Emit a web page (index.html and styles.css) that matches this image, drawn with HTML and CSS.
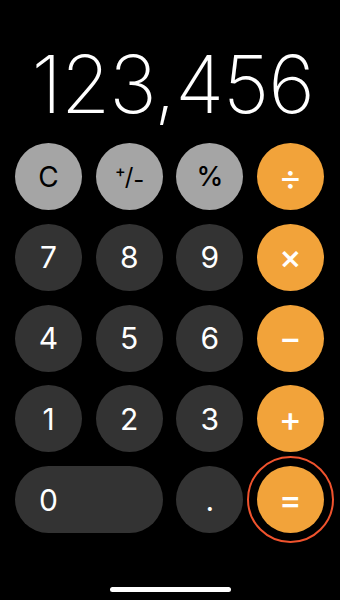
FILE: index.html
```html
<!DOCTYPE html>
<html>
<head>
<meta charset="utf-8">
<link rel="stylesheet" href="styles.css">
</head>
<body>
<div class="screen">
  <div class="display">123,456</div>
  <div class="keypad">
    <button class="key fn">C</button>
    <button class="key fn pm"><span class="pm-plus">+</span><span class="pm-slash">/</span><span class="pm-minus">-</span></button>
    <button class="key fn pct">%</button>
    <button class="key op div">÷</button>

    <button class="key num">7</button>
    <button class="key num">8</button>
    <button class="key num">9</button>
    <button class="key op">×</button>

    <button class="key num">4</button>
    <button class="key num">5</button>
    <button class="key num">6</button>
    <button class="key op">−</button>

    <button class="key num">1</button>
    <button class="key num">2</button>
    <button class="key num">3</button>
    <button class="key op">+</button>

    <button class="key num zero">0</button>
    <button class="key num dot">.</button>
    <button class="key op eq">=<span class="ring"></span></button>
  </div>
  <div class="home-bar"><div class="home-indicator"></div></div>
</div>
</body>
</html>
```

FILE: styles.css
```css
html, body {
  margin: 0;
  padding: 0;
  background: #000;
}
.screen {
  width: 340px;
  height: 600px;
  background: #000;
  display: flex;
  flex-direction: column;
  font-family: Inter, "Liberation Sans", sans-serif;
}
.display {
  height: 143px;
  box-sizing: border-box;
  color: #fff;
  font-size: 80px;
  font-weight: 200;
  line-height: 1;
  padding-right: 26px;
  padding-bottom: 19px;
  display: flex;
  align-items: flex-end;
  justify-content: flex-end;
  letter-spacing: -1px;
}
.keypad {
  display: grid;
  grid-template-columns: repeat(4, 67px);
  grid-auto-rows: 67px;
  column-gap: 13.67px;
  row-gap: 13.75px;
  padding-left: 15px;
}
.key {
  position: relative;
  border: none;
  border-radius: 50%;
  margin: 0;
  padding: 0;
  font-family: Inter, "Liberation Sans", sans-serif;
  display: flex;
  align-items: center;
  justify-content: center;
  line-height: 1;
}
.fn {
  background: #a5a5a5;
  color: #000;
  font-size: 28px;
  font-weight: 400;
}
.pct {
  font-weight: 500;
  font-size: 27px;
}
.num {
  background: #333333;
  color: #fff;
  font-size: 30px;
  font-weight: 400;
}
.op {
  background: #f2a33a;
  color: #fff;
  font-size: 34px;
  font-weight: 500;
}
.div {
  font-size: 36px;
  font-weight: 400;
}
.pm-plus {
  font-size: 16px;
  font-weight: 500;
  transform: translate(1px, -6px);
}
.pm-slash {
  font-size: 24px;
}
.pm-minus {
  font-size: 24px;
  transform: translate(0, 3px);
}
.zero {
  grid-column: span 2;
  border-radius: 34px;
  justify-content: flex-start;
  padding-left: 24px;
}
.ring {
  position: absolute;
  left: -10px;
  top: -10px;
  right: -10px;
  bottom: -10px;
  border: 2.5px solid #f0532d;
  border-radius: 50%;
}
.home-bar {
  flex: 1;
  display: flex;
  align-items: flex-end;
  justify-content: center;
  padding-bottom: 8px;
}
.home-indicator {
  width: 121px;
  height: 5px;
  background: #fff;
  border-radius: 3px;
}
```
